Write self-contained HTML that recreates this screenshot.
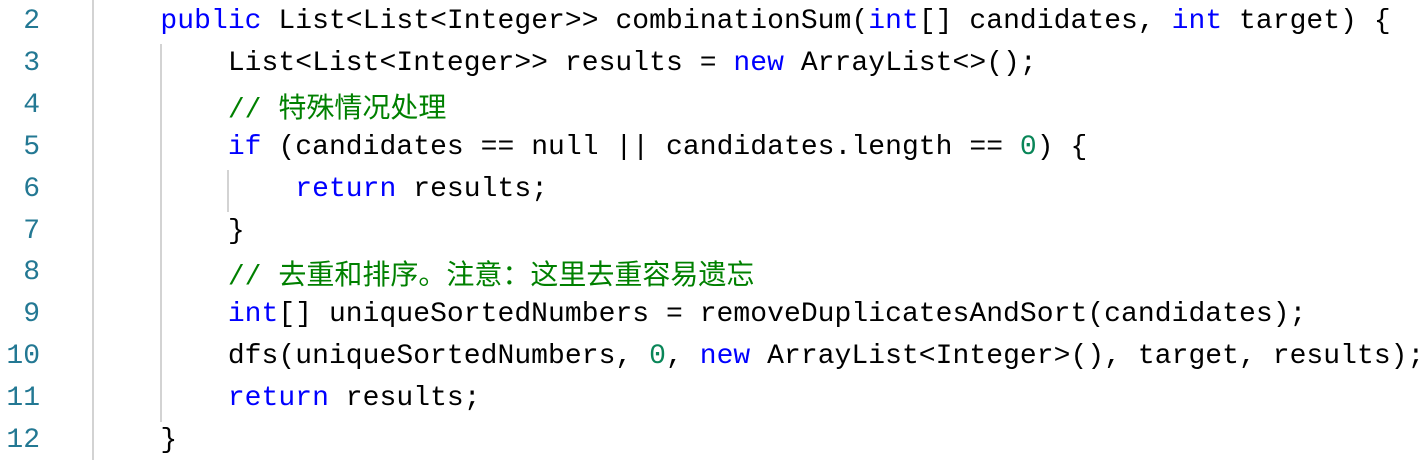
<!DOCTYPE html>
<html><head><meta charset="utf-8"><style>
body{margin:0;width:1428px;height:460px;background:#fff;overflow:hidden;position:relative}
.ln{position:absolute;left:0;width:40px;text-align:right;color:#237893;font:28px "Liberation Mono",monospace;}
.code{position:absolute;left:93px;font:28px "Liberation Mono",monospace;white-space:pre;color:#000;letter-spacing:0.05px}
.row{position:absolute;height:42px;line-height:42px}
.k{color:#0000ff}.c{color:#008000}.n{color:#098658}
.cj{font-family:"Noto Sans CJK SC",sans-serif;font-size:28px;letter-spacing:0}
.g{position:absolute;width:2px;background:#d3d3d3}
</style></head><body>
<div class="g" style="left:92px;top:0;height:460px"></div>
<div class="g" style="left:160px;top:44px;height:378px"></div>
<div class="g" style="left:227px;top:170px;height:42px"></div>
<div id="w"></div>
<script>
var lines=[
[2,'    <span class="k">public</span> List&lt;List&lt;Integer&gt;&gt; combinationSum(<span class="k">int</span>[] candidates, <span class="k">int</span> target) {'],
[3,'        List&lt;List&lt;Integer&gt;&gt; results = <span class="k">new</span> ArrayList&lt;&gt;();'],
[4,'        <span class="c">// <span class="cj">特殊情况处理</span></span>'],
[5,'        <span class="k">if</span> (candidates == null || candidates.length == <span class="n">0</span>) {'],
[6,'            <span class="k">return</span> results;'],
[7,'        }'],
[8,'        <span class="c">// <span class="cj">去重和排序。注意：这里去重容易遗忘</span></span>'],
[9,'        <span class="k">int</span>[] uniqueSortedNumbers = removeDuplicatesAndSort(candidates);'],
[10,'        dfs(uniqueSortedNumbers, <span class="n">0</span>, <span class="k">new</span> ArrayList&lt;Integer&gt;(), target, results);'],
[11,'        <span class="k">return</span> results;'],
[12,'    }']];
var h='';
lines.forEach(function(l,i){var t=1+i*41.9;
h+='<div class="ln row" style="top:'+t+'px">'+l[0]+'</div><div class="code row" style="top:'+t+'px">'+l[1]+'</div>';});
document.getElementById('w').innerHTML=h;
</script>
</body></html>
